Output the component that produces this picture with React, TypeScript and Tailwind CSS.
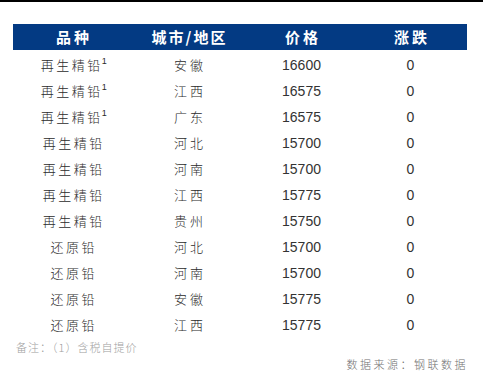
import React from 'react';

interface Row {
  name: string;
  sup?: boolean;
  city: string;
  price: string;
  change: string;
}

const rows: Row[] = [
  { name: '再生精铅', sup: true, city: '安徽', price: '16600', change: '0' },
  { name: '再生精铅', sup: true, city: '江西', price: '16575', change: '0' },
  { name: '再生精铅', sup: true, city: '广东', price: '16575', change: '0' },
  { name: '再生精铅', city: '河北', price: '15700', change: '0' },
  { name: '再生精铅', city: '河南', price: '15700', change: '0' },
  { name: '再生精铅', city: '江西', price: '15775', change: '0' },
  { name: '再生精铅', city: '贵州', price: '15750', change: '0' },
  { name: '还原铅', city: '河北', price: '15700', change: '0' },
  { name: '还原铅', city: '河南', price: '15700', change: '0' },
  { name: '还原铅', city: '安徽', price: '15775', change: '0' },
  { name: '还原铅', city: '江西', price: '15775', change: '0' },
];

const cjk = "font-['Noto_Sans_CJK_SC',sans-serif]";

const App: React.FC = () => {
  return (
    <div className="w-[486px] h-[389px] bg-white overflow-hidden">
      {/* top rule */}
      <div className="w-[483px] h-[2px] bg-black" />

      <div className="ml-[13px] mt-[22px] w-[454px]">
        {/* Header */}
        <div className={`grid grid-cols-[119px_113px_113px_105px] h-[26px] items-center bg-[#033a83] text-white text-[15px] font-bold ${cjk}`}>
          <div className="text-center tracking-[3px] pl-[3px]">品种</div>
          <div className="text-center tracking-[2px] pl-[2px]">城市/地区</div>
          <div className="text-center tracking-[3px] pl-[3px]">价格</div>
          <div className="text-center tracking-[3px] pl-[3px]">涨跌</div>
        </div>

        {/* Rows */}
        <div className="mt-[2px]">
          {rows.map((r, i) => (
            <div key={i} className="grid grid-cols-[119px_113px_113px_105px] h-[26px] items-center text-[#2b2b2b]">
              <div className={`text-center text-[13px] font-light tracking-[2.5px] pl-[2.5px] ${cjk}`}>
                {r.name}
                {r.sup && (
                  <span className="relative -top-[6px] -ml-[1px] text-[9px] leading-none font-['Liberation_Sans',sans-serif] tracking-normal">1</span>
                )}
              </div>
              <div className={`text-center text-[13px] font-light tracking-[3px] pl-[3px] ${cjk}`}>{r.city}</div>
              <div className="text-center text-[14px] text-[#333] font-['Liberation_Sans',sans-serif]">{r.price}</div>
              <div className="text-center text-[14px] text-[#333] font-['Liberation_Sans',sans-serif]">{r.change}</div>
            </div>
          ))}
        </div>
      </div>

      {/* Notes */}
      <div className={`ml-[16px] mt-[2px] h-[14px] leading-[14px] text-[11px] tracking-[1px] text-[#a0a0a0] font-light ${cjk}`}>
        备注：（1）含税自提价
      </div>
      <div className={`mt-[3px] w-[468px] text-right h-[14px] leading-[14px] text-[11px] tracking-[2.5px] text-[#707070] font-light ${cjk}`}>
        数据来源：钢联数据
      </div>
    </div>
  );
};

export default App;
